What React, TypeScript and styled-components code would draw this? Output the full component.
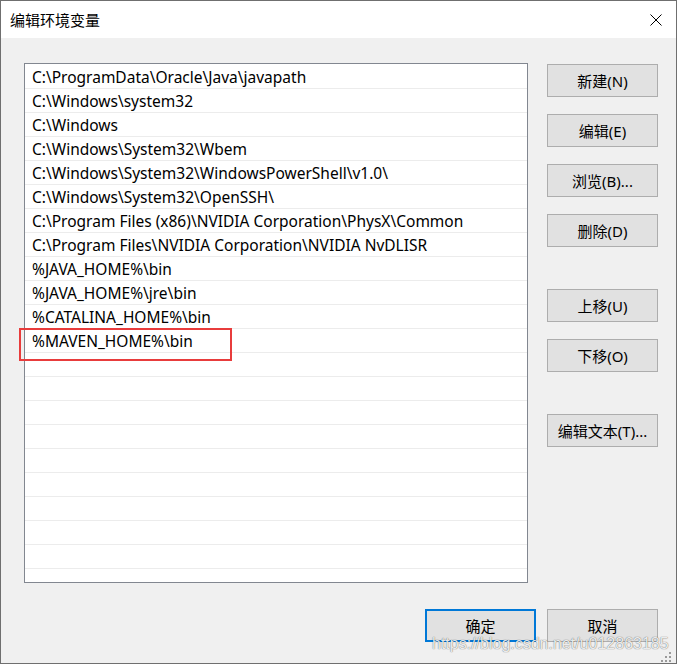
import React from "react";
import styled, { createGlobalStyle } from "styled-components";

const Global = createGlobalStyle`
  html, body { margin: 0; padding: 0; background: #f0f0f0; }
  body { width: 677px; height: 664px; overflow: hidden; }
  * { box-sizing: border-box; }
`;

const FONT = `"Noto Sans", "Noto Sans CJK SC", sans-serif`;

const Window = styled.div`
  position: relative;
  width: 677px;
  height: 664px;
  border: 1px solid #6f6f6f;
  background: #f0f0f0;
  display: flex;
  flex-direction: column;
  font-family: ${FONT};
  font-size: 15px;
  color: #000;
`;

const TitleBar = styled.div`
  height: 37px;
  background: #fff;
  display: flex;
  align-items: center;
  justify-content: space-between;
  padding: 0 14px 0 9px;
  flex-shrink: 0;
`;

const Title = styled.span`
  font-family: "Noto Sans CJK SC", sans-serif;
  font-size: 15px;
  line-height: 20px;
`;

const CloseIcon = styled.svg`
  width: 12px;
  height: 12px;
  display: block;
`;

const Body = styled.div`
  flex: 1;
  display: flex;
  flex-direction: column;
  padding: 25px 18px 21px 23px;
`;

const Main = styled.div`
  display: flex;
  gap: 19px;
`;

const ListArea = styled.div`
  position: relative;
  width: 504px;
  height: 520px;
`;

const ListBox = styled.div`
  width: 100%;
  height: 100%;
  border: 1px solid #828790;
  background: #fff;
  overflow: hidden;
  padding-top: 1px;
`;

const Row = styled.div`
  height: 24px;
  border-bottom: 1px solid #ececec;
  padding-left: 7px;
  display: flex;
  align-items: center;
  white-space: nowrap;
  font-size: 15.5px;
  line-height: 20px;
  padding-top: 1px;
`;

const Highlight = styled.div`
  position: absolute;
  left: -5px;
  top: 265px;
  width: 213px;
  height: 33px;
  border: 2px solid #e83c3c;
  pointer-events: none;
`;

const Side = styled.div`
  display: flex;
  flex-direction: column;
  padding-top: 1px;
`;

const Button = styled.div<{ $gap?: number; $primary?: boolean }>`
  width: 111px;
  height: 33px;
  margin-top: ${(p) => p.$gap ?? 0}px;
  background: #e1e1e1;
  border: ${(p) => (p.$primary ? "2px solid #0078d7" : "1px solid #adadad")};
  display: flex;
  align-items: center;
  justify-content: center;
  font-size: 15px;
  line-height: 20px;
  white-space: nowrap;
`;

const Footer = styled.div`
  margin-top: 26px;
  display: flex;
  justify-content: flex-end;
  gap: 11px;
`;

const Watermark = styled.div`
  position: absolute;
  left: 431px;
  top: 634px;
  font-family: "Liberation Sans", Arial, sans-serif;
  font-size: 16px;
  line-height: 18px;
  color: rgba(255, 255, 255, 0.9);
  text-shadow: 0 0 1px rgba(0, 0, 0, 0.5), 0 0 1px rgba(0, 0, 0, 0.3);
  white-space: nowrap;
  pointer-events: none;
`;

const Grip = styled.svg`
  position: absolute;
  right: 3px;
  bottom: 1px;
  width: 12px;
  height: 10px;
`;

const paths = [
  "C:\\ProgramData\\Oracle\\Java\\javapath",
  "C:\\Windows\\system32",
  "C:\\Windows",
  "C:\\Windows\\System32\\Wbem",
  "C:\\Windows\\System32\\WindowsPowerShell\\v1.0\\",
  "C:\\Windows\\System32\\OpenSSH\\",
  "C:\\Program Files (x86)\\NVIDIA Corporation\\PhysX\\Common",
  "C:\\Program Files\\NVIDIA Corporation\\NVIDIA NvDLISR",
  "%JAVA_HOME%\\bin",
  "%JAVA_HOME%\\jre\\bin",
  "%CATALINA_HOME%\\bin",
  "%MAVEN_HOME%\\bin",
];

const rows = [...paths, ...Array(22 - paths.length).fill("")];

const sideButtons: { label: string; gap: number }[] = [
  { label: "新建(N)", gap: 0 },
  { label: "编辑(E)", gap: 17 },
  { label: "浏览(B)...", gap: 17 },
  { label: "删除(D)", gap: 17 },
  { label: "上移(U)", gap: 42 },
  { label: "下移(O)", gap: 17 },
  { label: "编辑文本(T)...", gap: 42 },
];

export default function App() {
  return (
    <>
      <Global />
      <Window>
        <TitleBar>
          <Title>编辑环境变量</Title>
          <CloseIcon viewBox="0 0 12 12">
            <path d="M0.5 0.5 L11.5 11.5 M11.5 0.5 L0.5 11.5" stroke="#000" strokeWidth="1" fill="none" />
          </CloseIcon>
        </TitleBar>
        <Body>
          <Main>
            <ListArea>
              <ListBox>
                {rows.map((r, i) => (
                  <Row key={i}>{r}</Row>
                ))}
              </ListBox>
              <Highlight />
            </ListArea>
            <Side>
              {sideButtons.map((b) => (
                <Button key={b.label} $gap={b.gap}>
                  {b.label}
                </Button>
              ))}
            </Side>
          </Main>
          <Footer>
            <Button $primary>确定</Button>
            <Button>取消</Button>
          </Footer>
        </Body>
        <Watermark>https://blog.csdn.net/u012863185</Watermark>
        <Grip viewBox="0 0 12 10">
          <rect x="8" y="0" width="2" height="2" fill="#9a9a9a" />
          <rect x="4" y="4" width="2" height="2" fill="#9a9a9a" />
          <rect x="8" y="4" width="2" height="2" fill="#9a9a9a" />
          <rect x="0" y="8" width="2" height="2" fill="#9a9a9a" />
          <rect x="4" y="8" width="2" height="2" fill="#9a9a9a" />
          <rect x="8" y="8" width="2" height="2" fill="#9a9a9a" />
        </Grip>
      </Window>
    </>
  );
}
